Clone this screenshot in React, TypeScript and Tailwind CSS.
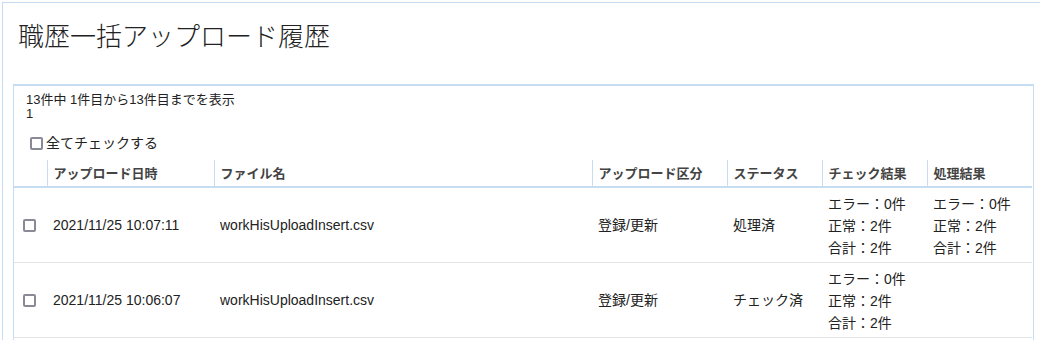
const rows = [
  {
    date: "2021/11/25 10:07:11",
    file: "workHisUploadInsert.csv",
    kind: "登録/更新",
    status: "処理済",
    check: ["エラー：0件", "正常：2件", "合計：2件"],
    result: ["エラー：0件", "正常：2件", "合計：2件"],
  },
  {
    date: "2021/11/25 10:06:07",
    file: "workHisUploadInsert.csv",
    kind: "登録/更新",
    status: "チェック済",
    check: ["エラー：0件", "正常：2件", "合計：2件"],
    result: [],
  },
];

const headers = [
  { label: "", w: "w-[33px]" },
  { label: "アップロード日時", w: "w-[167px]" },
  { label: "ファイル名", w: "w-[378px]" },
  { label: "アップロード区分", w: "w-[135px]" },
  { label: "ステータス", w: "w-[95px]" },
  { label: "チェック結果", w: "w-[105px]" },
  { label: "処理結果", w: "w-[105px]" },
];

function Box() {
  return <span className="inline-block w-[13px] h-[13px] border-2 border-[#8a8a96] rounded-[2px] bg-white" />;
}

export default function App() {
  return (
    <div
      className="w-[1040px] h-[340px] overflow-hidden bg-white pt-[2px] pl-[2px] text-[#333]"
      style={{ fontFamily: '"Liberation Sans", "Noto Sans CJK JP", sans-serif' }}
    >
      <div className="w-[1050px] h-[400px] border border-[#c6dcf2] pl-[10px]">
        <h1 className="pl-[5px] pt-[16px] h-[81px] text-[26px] leading-[36px] font-light text-[#222]">
          職歴一括アップロード履歴
        </h1>

        <div className="w-[1021px] h-[300px] border-t-2 border-x border-[#c6dcf2]">
          <div className="pl-[12px] pt-[7px] text-[13px] leading-[14px] text-[#222]">
            <div>13件中 1件目から13件目までを表示</div>
            <div>1</div>
          </div>

          <label className="flex items-center gap-[3px] pl-[16px] mt-[13px] h-[18px] text-[14px] text-[#222]">
            <span className="inline-block w-[13px] h-[13px] border-2 border-[#8a8a96] rounded-[2px]" />
            全てチェックする
          </label>

          <table className="mt-[8px] border-collapse table-fixed text-[14px]">
            <thead>
              <tr className="border-b-2 border-[#c6dcf2]">
                {headers.map((h, i) => (
                  <th
                    key={i}
                    className={`${h.w} h-[27px] pt-[1px] px-[6px] text-left text-[13px] font-bold text-[#444] ${
                      i > 0 ? "border-l border-[#c6dcf2]" : ""
                    }`}
                  >
                    {h.label}
                  </th>
                ))}
              </tr>
            </thead>
            <tbody>
              {rows.map((r, i) => (
                <tr key={i} className="border-b border-[#e4e4e4] h-[75px] text-[#222]">
                  <td className="pl-[9px] pt-[2px] align-middle">
                    <div className="flex items-center">
                      <Box />
                    </div>
                  </td>
                  <td className="px-[6px] pt-[2px]">{r.date}</td>
                  <td className="px-[6px] pt-[2px]">{r.file}</td>
                  <td className="px-[6px] pt-[2px]">{r.kind}</td>
                  <td className="px-[6px] pt-[2px]">{r.status}</td>
                  <td className="px-[6px] pt-[2px] leading-[22px]">
                    {r.check.map((c) => (
                      <div key={c}>{c}</div>
                    ))}
                  </td>
                  <td className="px-[6px] pt-[2px] leading-[22px]">
                    {r.result.map((c) => (
                      <div key={c}>{c}</div>
                    ))}
                  </td>
                </tr>
              ))}
            </tbody>
          </table>
        </div>
      </div>
    </div>
  );
}
